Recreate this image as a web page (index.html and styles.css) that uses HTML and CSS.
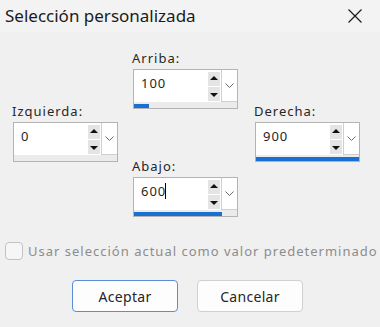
FILE: index.html
```html
<!DOCTYPE html>
<html lang="es">
<head>
<meta charset="utf-8">
<link rel="stylesheet" href="styles.css">
</head>
<body>
<div class="dialog">
  <div class="titlebar">
    <span class="title">Selección personalizada</span>
    <svg class="close" width="16" height="16" viewBox="0 0 16 16"><path d="M1.5 1.5 L14.5 14.5 M14.5 1.5 L1.5 14.5" stroke="#1a1a1a" stroke-width="1.2" fill="none"/></svg>
  </div>
  <div class="fields">
    <div class="col col-side">
      <div class="lbl">Izquierda:</div>
      <div class="spin">
        <div class="spin-top">
          <div class="edit"><span class="val">0</span><div class="arrows"><span class="arr up"></span><span class="arr down"></span></div></div>
          <div class="drop"><svg width="9" height="5" viewBox="0 0 9 5"><path d="M0.5 0.5 L4.5 4.5 L8.5 0.5" stroke="#6a6a6a" fill="none"/></svg></div>
        </div>
        <div class="strip"><div class="fill" style="width:0px"></div></div>
      </div>
    </div>
    <div class="col col-mid">
      <div class="lbl">Arriba:</div>
      <div class="spin">
        <div class="spin-top">
          <div class="edit"><span class="val">100</span><div class="arrows"><span class="arr up"></span><span class="arr down"></span></div></div>
          <div class="drop"><svg width="9" height="5" viewBox="0 0 9 5"><path d="M0.5 0.5 L4.5 4.5 L8.5 0.5" stroke="#6a6a6a" fill="none"/></svg></div>
        </div>
        <div class="strip"><div class="fill" style="width:15px"></div></div>
      </div>
      <div class="lbl lbl-low">Abajo:</div>
      <div class="spin">
        <div class="spin-top">
          <div class="edit"><span class="val">600<span class="caret"></span></span><div class="arrows"><span class="arr up"></span><span class="arr down"></span></div></div>
          <div class="drop"><svg width="9" height="5" viewBox="0 0 9 5"><path d="M0.5 0.5 L4.5 4.5 L8.5 0.5" stroke="#6a6a6a" fill="none"/></svg></div>
        </div>
        <div class="strip"><div class="fill" style="width:88px"></div></div>
      </div>
    </div>
    <div class="col col-side col-right">
      <div class="lbl">Derecha:</div>
      <div class="spin">
        <div class="spin-top">
          <div class="edit"><span class="val">900</span><div class="arrows"><span class="arr up"></span><span class="arr down"></span></div></div>
          <div class="drop"><svg width="9" height="5" viewBox="0 0 9 5"><path d="M0.5 0.5 L4.5 4.5 L8.5 0.5" stroke="#6a6a6a" fill="none"/></svg></div>
        </div>
        <div class="strip"><div class="fill" style="width:103px"></div></div>
      </div>
    </div>
  </div>
  <div class="check-row">
    <span class="checkbox"></span>
    <span class="check-text">Usar selección actual como valor predeterminado</span>
  </div>
  <div class="buttons">
    <button class="btn btn-default">Aceptar</button>
    <button class="btn">Cancelar</button>
  </div>
</div>
</body>
</html>
```
FILE: styles.css
```css
html, body {
  margin: 0;
  padding: 0;
}
body {
  width: 380px;
  height: 327px;
  background: #f0f0f0;
  font-family: "Noto Sans", "DejaVu Sans", sans-serif;
  color: #1a1a1a;
  overflow: hidden;
}
.dialog {
  width: 380px;
  height: 327px;
  display: flex;
  flex-direction: column;
}
.titlebar {
  height: 32px;
  background: #f3f3f3;
  display: flex;
  align-items: center;
  justify-content: space-between;
  padding: 0 17px 0 5px;
  box-sizing: border-box;
}
.title {
  font-size: 17px;
  color: #1b1b1b;
  line-height: 20px;
}
.close {
  display: block;
}
.fields {
  display: flex;
  padding-left: 13px;
}
.col {
  width: 105px;
  display: flex;
  flex-direction: column;
}
.col-side {
  padding-top: 70px;
}
.col-mid {
  padding-top: 17px;
  margin-left: 15px;
}
.col-right {
  margin-left: 17px;
}
.lbl {
  font-size: 13px;
  letter-spacing: 1px;
  line-height: 18px;
  height: 18px;
  margin-bottom: 2px;
  color: #262626;
  margin-left: -1px;
}
.lbl-low {
  margin-top: 48px;
}
.spin {
  width: 105px;
  height: 40px;
  box-sizing: border-box;
  border: 1px solid #b4b4b4;
  background: #fff;
  display: flex;
  flex-direction: column;
}
.spin-top {
  height: 32px;
  display: flex;
}
.edit {
  flex: 1;
  display: flex;
  justify-content: space-between;
}
.val {
  font-size: 13px;
  letter-spacing: 1px;
  line-height: 16px;
  padding: 5px 0 0 7px;
  color: #262626;
  display: flex;
  align-items: flex-start;
}
.caret {
  display: inline-block;
  width: 1px;
  height: 16px;
  background: #000;
  margin-left: -1px;
}
.arrows {
  width: 12px;
  padding: 2px 1px 0 0;
  display: flex;
  flex-direction: column;
  gap: 1px;
}
.arr {
  height: 14px;
  background: #e4e4e4;
  position: relative;
}
.arr::after {
  content: "";
  position: absolute;
  left: 2px;
  border-left: 4px solid transparent;
  border-right: 4px solid transparent;
}
.up::after {
  top: 4px;
  border-bottom: 4px solid #111;
}
.down::after {
  top: 6px;
  border-top: 4px solid #111;
}
.drop {
  width: 16px;
  box-sizing: border-box;
  border-left: 1px solid #cfcfcf;
  border-bottom: 1px solid #cfcfcf;
  display: flex;
  align-items: center;
  justify-content: center;
}
.drop svg {
  display: block;
}
.strip {
  flex: 1;
  background: #ebebeb;
  display: flex;
  align-items: flex-end;
}
.fill {
  height: 4px;
  background: #1b6ed2;
}
.check-row {
  display: flex;
  align-items: center;
  margin-top: 25px;
  padding-left: 5px;
  height: 18px;
}
.checkbox {
  width: 18px;
  height: 18px;
  box-sizing: border-box;
  border: 1px solid #c2c2c2;
  border-radius: 4px;
  background: #f6f6f6;
}
.check-text {
  margin-left: 5px;
  font-size: 13px;
  letter-spacing: 1px;
  color: #8c8c8c;
  line-height: 18px;
}
.buttons {
  display: flex;
  gap: 19px;
  padding-left: 72px;
  margin-top: 20px;
}
.btn {
  width: 106px;
  height: 32px;
  box-sizing: border-box;
  border: 1px solid #d0d0d0;
  border-radius: 4px;
  background: #fdfdfd;
  font-family: "Noto Sans", "DejaVu Sans", sans-serif;
  font-size: 14px;
  letter-spacing: 0.3px;
  color: #262626;
  padding: 0;
}
.btn-default {
  border-color: #5a8ed4;
}
```
